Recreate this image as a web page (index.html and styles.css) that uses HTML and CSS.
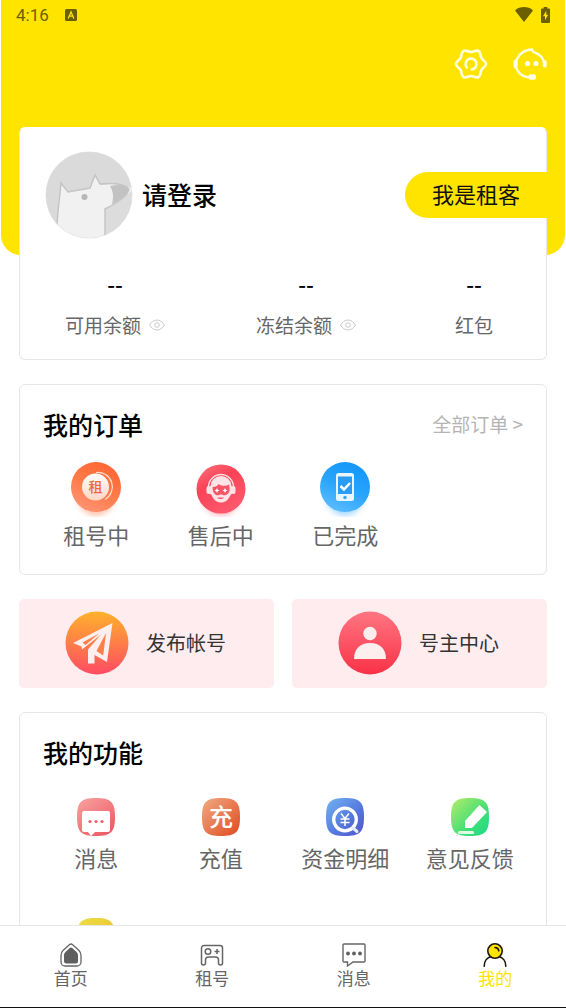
FILE: index.html
```html
<!DOCTYPE html>
<html lang="zh-CN">
<head>
<meta charset="utf-8">
<meta name="viewport" content="width=device-width, initial-scale=1">
<title>我的</title>
<link rel="stylesheet" href="styles.css">
</head>
<body>
<main class="page">
  <header class="hero">
    <div class="status">
      <span class="status-time">4:16</span>
      <svg class="status-app" viewBox="0 0 12 12" aria-hidden="true"><rect width="12" height="12" rx="1.5" fill="#6b5f00"/><path d="M3.2 9.4 6 2.8 8.8 9.4M4.4 7.2h3.2" fill="none" stroke="#ffe400" stroke-width="1.3"/></svg>
      <svg class="status-wifi" viewBox="0 0 18 15" aria-hidden="true"><path d="M0 3.4C5-1 13-1 18 3.4L9 15z" fill="#6b5f00"/></svg>
      <svg class="status-battery" viewBox="0 0 9 16" aria-hidden="true"><path d="M2.7 0h3.6v1.6H8a1 1 0 0 1 1 1V15a1 1 0 0 1-1 1H1a1 1 0 0 1-1-1V2.600a1 1 0 0 1 1-1h1.700z" fill="#6b5f00"/><path d="M5.300 3.800 2 9.200h2v4l3.200-5.400H5.300z" fill="#ffe400"/></svg>
    </div>
    <div class="tools">
      <button class="icon-btn" type="button" aria-label="设置">
        <svg viewBox="0 0 34 34" fill="none" stroke="#fffde0" stroke-width="2.600" stroke-linecap="round" stroke-linejoin="round"><path d="M17 5C20 5 21.900 2.500 24.500 4S25.900 8.400 27.400 11 32 14 32 17s-3.100 3.400-4.600 6 0 5.500-2.900 7-4.500-1-7.500-1-4.900 2.500-7.500 1-1.400-4.400-2.900-7S2 20 2 17s3.100-3.400 4.600-6 0-5.500 2.900-7S14 5 17 5z"/><path d="M12.800 20.500a5.500 5.500 0 1 1 5 2"/></svg>
      </button>
      <button class="icon-btn" type="button" aria-label="客服">
        <svg viewBox="0 0 34 34" fill="none" stroke="#fffde8" stroke-width="2.300" stroke-linecap="round"><path d="M17 30.500C9 30 3 25 3 17.500 3 9 10.500 2.500 19 2.500c.5 2 1.500 3 3.500 3.300 4.500 1.600 7.500 5 8.500 9.700"/><path d="M2.500 14.500v5M31.700 15v3.500" stroke-width="4"/><rect x="15.500" y="27.300" width="7.500" height="5.500" rx="2" fill="#fffde8" stroke="none"/><circle cx="14.500" cy="16.500" r="2.600" fill="#fffde8" stroke="none"/><circle cx="23" cy="16.500" r="2.600" fill="#fffde8" stroke="none"/></svg>
      </button>
    </div>
  </header>

  <section class="card account">
    <div class="profile">
      <svg class="avatar" viewBox="0 0 88 88" aria-hidden="true">
        <defs><clipPath id="face"><circle cx="44" cy="44" r="43"/></clipPath></defs>
        <circle cx="44" cy="44" r="43.500" fill="#e2e2e2"/>
        <g clip-path="url(#face)">
          <rect width="88" height="88" fill="#dadada"/>
          <path d="M11 88 14 44l2-12 8 9 22-5 4-12 6 10 12-1 20 4-1 14-24 15v24z" fill="#f1f1f1"/>
          <path d="M65 35c9-2 18-1 19 4-2 6-8 11-17 14 2-8 1-13-2-18z" fill="#c2c2c2"/>
          <path d="M60 88V59l28-20v49z" fill="#dcdcdc"/>
          <path d="M12 78c0-17 3-32 4-46l7 9 22-4 5-13 5 9c12-1 25 0 29 5-1 6-8 12-24 20v28" fill="none" stroke="#c4c4c4" stroke-width="1.500"/>
        </g>
        <circle cx="39.500" cy="46" r="3" fill="#b7b7b7"/>
      </svg>
      <h1 class="title">请登录</h1>
      <button class="role" type="button">我是租客</button>
    </div>
    <dl class="stats">
      <div class="stat">
        <dt>可用余额<svg class="eye" viewBox="0 0 16 12" fill="none" stroke="#ccc" aria-hidden="true"><path d="M.6 6C4-.6 12-.6 15.400 6 12 12.600 4 12.600.6 6z"/><circle cx="8" cy="6" r="2.300"/></svg></dt>
        <dd>--</dd>
      </div>
      <div class="stat">
        <dt>冻结余额<svg class="eye" viewBox="0 0 16 12" fill="none" stroke="#ccc" aria-hidden="true"><path d="M.6 6C4-.6 12-.6 15.400 6 12 12.600 4 12.600.6 6z"/><circle cx="8" cy="6" r="2.300"/></svg></dt>
        <dd>--</dd>
      </div>
      <div class="stat">
        <dt>红包</dt>
        <dd>--</dd>
      </div>
    </dl>
  </section>

  <section class="card orders">
    <div class="card-head">
      <h2 class="title">我的订单</h2>
      <a class="more" href="#orders">全部订单 &gt;</a>
    </div>
    <div class="grid">
      <a class="entry" href="#renting">
        <svg class="order-icon" viewBox="0 0 52 56" aria-hidden="true">
          <defs>
            <linearGradient id="orange" x1=".8" y1="0" x2=".3" y2="1"><stop offset="0" stop-color="#ff6432"/><stop offset=".5" stop-color="#ff7947"/><stop offset="1" stop-color="#ff9474"/></linearGradient>
            <linearGradient id="cream" x1="0" y1="0" x2="0" y2="1"><stop offset="0" stop-color="#fff"/><stop offset="1" stop-color="#ffd5c4"/></linearGradient>
            <filter id="soft" x="-30%" y="-30%" width="160%" height="160%"><feGaussianBlur stdDeviation="3"/></filter>
          </defs>
          <circle cx="26" cy="36" r="18" fill="#ff7947" opacity=".5" filter="url(#soft)"/>
          <circle cx="26" cy="26" r="25" fill="url(#orange)"/>
          <path d="M26 11.500a14.500 14.500 0 0 1 9 27" fill="none" stroke="#ffe1d4" stroke-width="1.200"/>
          <circle cx="25.500" cy="26" r="13.500" fill="url(#cream)"/>
          <text class="glyph" x="25.500" y="31" font-size="14" fill="#f0683c">租</text>
        </svg>
        <span>租号中</span>
      </a>
      <a class="entry" href="#service">
        <svg class="order-icon" viewBox="0 0 52 56" aria-hidden="true">
          <defs><linearGradient id="rose" x1=".2" y1="0" x2=".8" y2="1"><stop offset="0" stop-color="#ff6a76"/><stop offset=".35" stop-color="#fa4257"/><stop offset="1" stop-color="#ff5c70"/></linearGradient></defs>
          <circle cx="26" cy="36" r="18" fill="#ff4d63" opacity=".5" filter="url(#soft)"/>
          <circle cx="26" cy="28" r="24.500" fill="url(#rose)"/>
          <path d="M13.500 26a12.500 12.500 0 0 1 25 0" fill="none" stroke="#ffdce0" stroke-width="1.500"/>
          <path d="M15.500 25a10.500 10 0 0 1 21 0l1.500 1v6l-2.500 2c-2 5-5.500 7.500-9.500 7.500s-7.500-2.500-9.500-7.500L14 32v-6z" fill="#ffe3e6"/>
          <rect x="11.500" y="25" width="4" height="8" rx="2" fill="#ffe3e6"/><rect x="36.500" y="25" width="4" height="8" rx="2" fill="#ffe3e6"/>
          <path d="M17.500 26c3 0 5-1 6-3 3 2.500 8 2 10.500.5 1.500 5.500.5 9-3 10.500-2 .8-3.500-.5-5-.5s-3 1.300-5 .5c-2.500-1.200-3.500-4-3.500-8z" fill="#f9566a"/>
          <path d="m22 27 .8 1.700 1.700.8-1.700.8-.8 1.700-.8-1.700-1.700-.8 1.700-.8zM30 27l.8 1.700 1.700.8-1.700.8-.8 1.700-.8-1.700-1.700-.8 1.700-.8z" fill="#fff"/>
          <path d="M22 36.500c2 2 5 2 7 0z" fill="#f9566a"/>
        </svg>
        <span>售后中</span>
      </a>
      <a class="entry" href="#done">
        <svg class="order-icon" viewBox="0 0 52 56" aria-hidden="true">
          <defs><linearGradient id="blue" x1=".75" y1="0" x2=".3" y2="1"><stop offset="0" stop-color="#1595fa"/><stop offset=".5" stop-color="#27a4fb"/><stop offset="1" stop-color="#5cbcff"/></linearGradient></defs>
          <circle cx="26" cy="36" r="18" fill="#35aaff" opacity=".5" filter="url(#soft)"/>
          <circle cx="26" cy="26" r="25" fill="url(#blue)"/>
          <rect x="17" y="12" width="18" height="28" rx="2.500" fill="#e9f6ff"/>
          <rect x="19" y="15.500" width="14" height="17.500" fill="#2a9cf5"/>
          <path d="m21.500 25 3.500 3.500 6-6.500" fill="none" stroke="#fff" stroke-width="2.500"/>
          <circle cx="26" cy="36.500" r="1.700" fill="#38a3f4"/>
        </svg>
        <span>已完成</span>
      </a>
    </div>
  </section>

  <nav class="banners" aria-label="快捷入口">
    <a class="banner" href="#publish">
      <svg class="banner-icon" viewBox="0 0 64 64" aria-hidden="true">
        <defs><linearGradient id="sunset" x1=".5" y1="0" x2=".5" y2="1"><stop offset="0" stop-color="#ffb12b"/><stop offset="1" stop-color="#ff4b63"/></linearGradient></defs>
        <circle cx="32" cy="32" r="31.500" fill="url(#sunset)"/>
        <path d="M8 32 47.500 12 42 51 29.500 44v8.500h-6.500V38.500L36 23.500 17 38.500l-.5-3z" fill="#ffeeee"/>
        <path d="M17.500 31.500 34 22.500 20.500 34zM41 22l-2.800 22.500L31.500 40z" fill="#ff7f49"/>
      </svg>
      <span>发布帐号</span>
    </a>
    <a class="banner" href="#owner">
      <svg class="banner-icon" viewBox="0 0 64 64" aria-hidden="true">
        <defs><linearGradient id="red" x1=".5" y1="0" x2=".5" y2="1"><stop offset="0" stop-color="#ff7681"/><stop offset="1" stop-color="#fa3148"/></linearGradient></defs>
        <circle cx="32" cy="32" r="31.500" fill="url(#red)"/>
        <circle cx="32" cy="22.500" r="6.700" fill="#ffeeee"/>
        <path d="M16 48c0-10 6-16 16-16s16 6 16 16z" fill="#ffeeee"/>
      </svg>
      <span>号主中心</span>
    </a>
  </nav>

  <section class="card features">
    <div class="card-head"><h2 class="title">我的功能</h2></div>
    <div class="grid">
      <a class="entry" href="#messages">
        <svg class="feature-icon" viewBox="0 0 38 38" aria-hidden="true">
          <defs>
            <linearGradient id="coral" x1="0" y1="0" x2=".8" y2="1"><stop offset="0" stop-color="#f7a4a0"/><stop offset="1" stop-color="#ee5965"/></linearGradient>
            <path id="tile" d="M19 0c15 0 19 4 19 19s-4 19-19 19S0 34 0 19 4 0 19 0z"/>
          </defs>
          <use href="#tile" fill="url(#coral)"/>
          <path d="M7 13h24a2 2 0 0 1 2 2v17a2 2 0 0 1-2 2H18l-4 4-3-4H7a2 2 0 0 1-2-2V15a2 2 0 0 1 2-2z" fill="#fff"/>
          <g fill="#ef626b"><circle cx="13" cy="23.500" r="1.600"/><circle cx="19" cy="23.500" r="1.600"/><circle cx="25" cy="23.500" r="1.600"/></g>
        </svg>
        <span>消息</span>
      </a>
      <a class="entry" href="#recharge">
        <svg class="feature-icon" viewBox="0 0 38 38" aria-hidden="true">
          <defs><linearGradient id="rust" x1="0" y1="0" x2="1" y2="1"><stop offset="0" stop-color="#f0ab83"/><stop offset="1" stop-color="#e04a20"/></linearGradient></defs>
          <use href="#tile" fill="url(#rust)"/>
          <text class="glyph" x="19" y="28" font-size="24" fill="#fff">充</text>
        </svg>
        <span>充值</span>
      </a>
      <a class="entry" href="#funds">
        <svg class="feature-icon" viewBox="0 0 38 38" aria-hidden="true">
          <defs><linearGradient id="indigo" x1="0" y1="0" x2="1" y2="1"><stop offset="0" stop-color="#72b4f2"/><stop offset=".6" stop-color="#5476dc"/><stop offset="1" stop-color="#5553c9"/></linearGradient></defs>
          <use href="#tile" fill="url(#indigo)"/>
          <circle cx="19" cy="21.500" r="11.300" fill="none" stroke="#fff" stroke-width="3.300"/>
          <path d="m27 30 4 3.500" stroke="#e5ebff" stroke-width="3" stroke-linecap="round"/>
          <path d="m15 15.500 4 5 4-5M19 20.500V28M14.500 21h9M14.500 24.500h9" fill="none" stroke="#fff" stroke-width="1.500"/>
        </svg>
        <span>资金明细</span>
      </a>
      <a class="entry" href="#feedback">
        <svg class="feature-icon" viewBox="0 0 38 38" aria-hidden="true">
          <defs><linearGradient id="green" x1="0" y1="0" x2="1" y2="1"><stop offset="0" stop-color="#b5ec6c"/><stop offset=".6" stop-color="#43df74"/><stop offset="1" stop-color="#1bd98b"/></linearGradient></defs>
          <use href="#tile" fill="url(#green)"/>
          <path d="M14.500 29.500v-6.500l14-15.500 7 6.500-14.500 15.500z" fill="#fff" stroke="#fff" stroke-linejoin="round"/>
          <path d="M8.500 34.500h13" stroke="#dcffe4" stroke-width="3.200" stroke-linecap="round"/>
        </svg>
        <span>意见反馈</span>
      </a>
      <a class="entry" href="#more" aria-label="更多">
        <svg class="feature-icon" viewBox="0 0 38 38" aria-hidden="true">
          <defs><linearGradient id="gold" x1="0" y1="0" x2="1" y2="1"><stop offset="0" stop-color="#ecdf45"/><stop offset="1" stop-color="#eeb92c"/></linearGradient></defs>
          <use href="#tile" fill="url(#gold)"/>
        </svg>
      </a>
    </div>
  </section>
</main>

<nav class="tabs" aria-label="主导航">
  <a class="tab" href="#home">
    <svg class="tab-icon" viewBox="0 0 24 24" aria-hidden="true"><path d="M10.600 1.600a2.200 2.200 0 0 1 2.800 0L20 7.500c1.500 1.500 2 3 2 5V19a4 4 0 0 1-4 4H6a4 4 0 0 1-4-4v-6.500c0-2 .5-3.500 2-5z" fill="none" stroke="#666" stroke-width="1.300"/><path d="M10.700 5a2 2 0 0 1 2.600 0l4 3.800C18.600 10 19 11 19 12.500V18a2.500 2.500 0 0 1-2.500 2.500h-9A2.500 2.500 0 0 1 5 18v-5.500C5 11 5.400 10 6.700 8.800z" fill="#606060"/></svg>
    <span>首页</span>
  </a>
  <a class="tab" href="#rent">
    <svg class="tab-icon" viewBox="0 0 24 24" fill="none" stroke="#666" stroke-width="1.500" aria-hidden="true"><path d="M4 2.500h16a2.500 2.500 0 0 1 2.500 2.500v15a2 2 0 0 1-4 0v-3a3 3 0 0 0-3-3h-7a3 3 0 0 0-3 3v3a2 2 0 0 1-4 0V5A2.500 2.500 0 0 1 4 2.500z"/><circle cx="8" cy="8.500" r="2.800"/><path d="M14.500 8.500h5M17 6v5"/></svg>
    <span>租号</span>
  </a>
  <a class="tab" href="#chat">
    <svg class="tab-icon" viewBox="0 0 24 24" fill="none" stroke="#666" stroke-width="1.400" aria-hidden="true"><path d="M2 1h20a1 1 0 0 1 1 1v16a1 1 0 0 1-1 1H11l-5.500 4V19H2a1 1 0 0 1-1-1V2a1 1 0 0 1 1-1z"/><g fill="#606060" stroke="none"><circle cx="6" cy="10.500" r="1.900"/><circle cx="12" cy="10.500" r="1.900"/><circle cx="18" cy="10.500" r="1.900"/></g></svg>
    <span>消息</span>
  </a>
  <a class="tab tab-current" href="#me" aria-current="page">
    <svg class="tab-icon" viewBox="0 0 24 24" fill="none" stroke="#1c1808" stroke-width="1.600" stroke-linecap="round" aria-hidden="true"><path d="M1.200 23.200c0-5 3-8.700 7-9.700M22.800 23.200c0-5-3-8.700-7-9.700"/><circle cx="12" cy="8" r="7.200" fill="#ffe400"/><path d="M12 4.500c2 0 3.500 1.300 3.800 3.300"/></svg>
    <span>我的</span>
  </a>
</nav>
</body>
</html>
```
FILE: styles.css
```css
* {
  box-sizing: border-box;
}

body {
  display: flex;
  flex-direction: column;
  height: 100vh;
  margin: 0;
  background: #fff;
  color: #666;
  font-family: "Noto Sans CJK SC", sans-serif;
}

h1, h2, dl, dd {
  margin: 0;
}

svg {
  display: block;
  flex: none;
}

a {
  color: inherit;
  text-decoration: none;
}

button {
  border: 0;
  font-family: inherit;
  cursor: pointer;
}

.page {
  flex: 1;
  min-height: 0;
  overflow-y: auto;
  scrollbar-width: none;
}

.hero {
  margin: 0 1px;
  padding-bottom: 174px;
  background: #ffe400;
  border-radius: 0 0 20px 20px;
}

.status {
  display: flex;
  align-items: center;
  height: 29px;
  padding: 0 15px;
  color: #6b5f00;
  font: 17px/20px Roboto, sans-serif;
}

.status-app {
  width: 12px;
  height: 12px;
  margin-left: 16px;
}

.status-wifi {
  width: 18px;
  height: 15px;
  margin-left: auto;
}

.status-battery {
  width: 9px;
  height: 16px;
  margin-left: 8px;
}

.tools {
  display: flex;
  justify-content: flex-end;
  gap: 25px;
  padding: 18px 18px 0;
}

.icon-btn {
  width: 34px;
  height: 34px;
  padding: 0;
  background: none;
}

.card {
  margin: 24px 19px 0;
  border: 1px solid #e6e6e6;
  border-radius: 6px;
  background: #fff;
}

.title {
  color: #000;
  font-size: 25px;
  font-weight: 500;
  line-height: 30px;
}

.account {
  margin-top: -128px;
  padding: 23px 0 20px;
  border-top-color: #fff;
}

.profile {
  display: flex;
  align-items: center;
  padding-left: 25px;
}

.profile .title {
  padding-bottom: 2px;
}

.avatar {
  width: 88px;
  height: 88px;
  margin-right: 9px;
}

.role {
  height: 46px;
  margin: 0 -1px 0 auto;
  padding: 0 27px 4px;
  border-radius: 23px 0 0 23px;
  background: #ffe400;
  color: #111;
  font-size: 22px;
  line-height: 30px;
}

.stats {
  display: grid;
  grid-template-columns: 190fr 192fr 144fr;
  padding-top: 30px;
}

.stat {
  display: flex;
  flex-direction: column-reverse;
  align-items: center;
  gap: 14px;
}

.stat dt {
  display: flex;
  align-items: center;
  font-size: 19px;
  line-height: 28px;
}

.stat dd {
  color: #000;
  font-size: 22px;
  font-weight: 500;
  line-height: 28px;
}

.eye {
  width: 16px;
  height: 12px;
  margin-left: 8px;
}

.card-head {
  display: flex;
  align-items: center;
  justify-content: space-between;
  padding: 24px 23px 0;
}

.more {
  color: #b4b4b4;
  font-size: 19px;
  line-height: 30px;
}

.grid {
  display: grid;
  grid-template-columns: repeat(4, 1fr);
  padding: 0 14px;
}

.entry {
  display: flex;
  flex-direction: column;
  align-items: center;
  font-size: 22px;
  line-height: 28px;
  white-space: nowrap;
}

.glyph {
  font-family: "Noto Sans CJK SC", sans-serif;
  font-weight: 500;
  text-anchor: middle;
}

.orders .grid {
  padding-top: 22px;
  padding-bottom: 26px;
}

.order-icon {
  width: 52px;
  height: 56px;
  margin-bottom: 3px;
}

.banners {
  display: grid;
  grid-template-columns: 1fr 1fr;
  gap: 18px;
  margin: 24px 19px 0;
}

.banner {
  display: flex;
  align-items: center;
  justify-content: center;
  gap: 17px;
  height: 89px;
  padding: 0 2px 2px 0;
  border-radius: 5px;
  background: #ffecee;
  color: #333;
  font-size: 20px;
  line-height: 28px;
}

.banner-icon {
  width: 64px;
  height: 64px;
}

.features .grid {
  row-gap: 47px;
  padding-top: 31px;
  padding-bottom: 24px;
}

.feature-icon {
  width: 38px;
  height: 38px;
  margin-bottom: 7px;
}

.tabs {
  display: grid;
  grid-template-columns: repeat(4, 1fr);
  height: 83px;
  padding-top: 17px;
  border-top: 1px solid #e6e6e6;
  border-bottom: 1px solid #111;
  background: #fff;
}

.tab {
  display: flex;
  flex-direction: column;
  align-items: center;
  gap: 1px;
  font-size: 17px;
  line-height: 20px;
}

.tab-icon {
  width: 24px;
  height: 24px;
}

.tab-current {
  color: #ffe400;
}
```
